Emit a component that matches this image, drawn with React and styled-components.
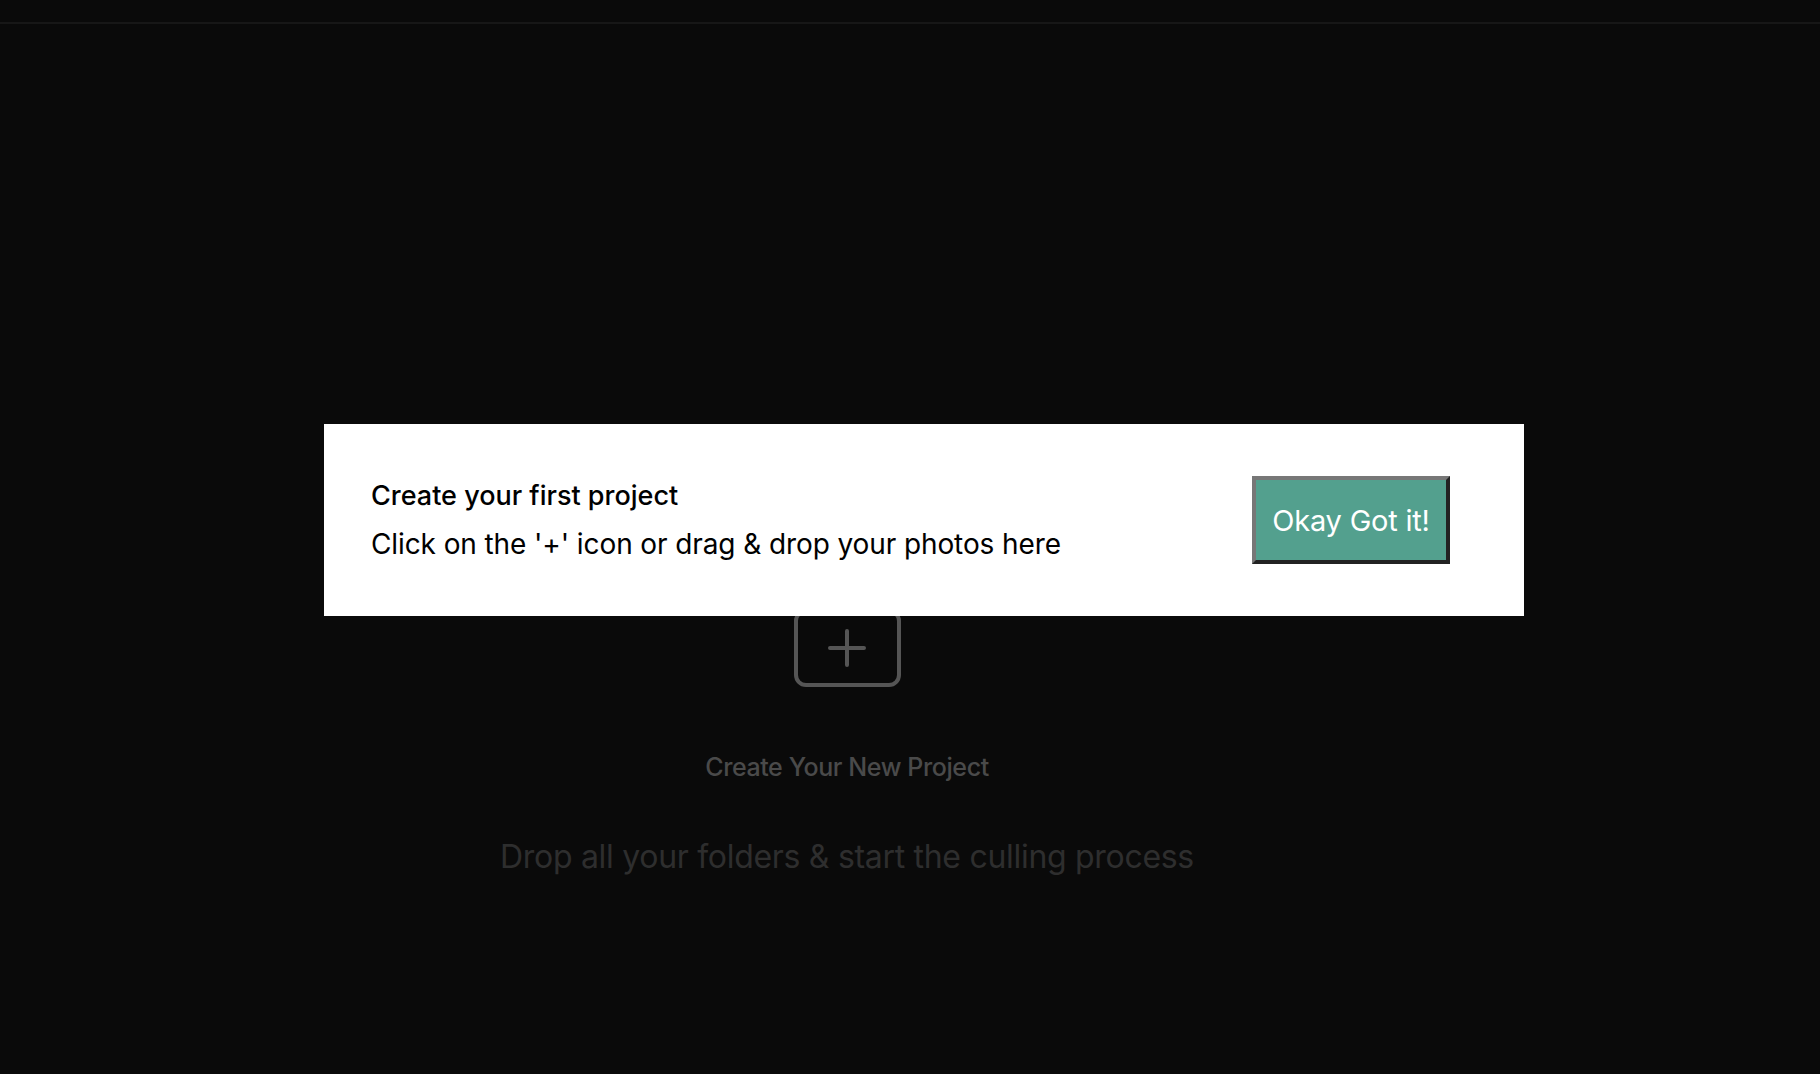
import React from "react";
import styled, { createGlobalStyle } from "styled-components";

const GlobalStyle = createGlobalStyle`
  html, body {
    margin: 0;
    padding: 0;
    background: #0a0a0a;
  }
  body {
    font-family: Inter, "Noto Sans", "Liberation Sans", sans-serif;
  }
  * {
    box-sizing: border-box;
  }
`;

const App = () => {
  return (
    <Page>
      <GlobalStyle />
      <TopBar />
      <Main>
        <AddBox aria-label="Create project">
          <svg width="38" height="38" viewBox="0 0 38 38" fill="none">
            <path
              d="M19 2v34M2 19h34"
              stroke="#555"
              strokeWidth="4"
              strokeLinecap="round"
            />
          </svg>
        </AddBox>
        <Heading>Create Your New Project</Heading>
        <Hint>Drop all your folders &amp; start the culling process</Hint>
      </Main>

      <Tour>
        <TourText>
          <TourTitle>Create your first project</TourTitle>
          <TourBody>Click on the '+' icon or drag &amp; drop your photos here</TourBody>
        </TourText>
        <OkButton>Okay Got it!</OkButton>
      </Tour>
    </Page>
  );
};

// Styled-components
const Page = styled.div`
  position: relative;
  min-height: 100vh;
  display: flex;
  flex-direction: column;
  background: #0a0a0a;
`;

const TopBar = styled.div`
  height: 24px;
  border-bottom: 2px solid #171717;
`;

const Main = styled.div`
  display: flex;
  flex-direction: column;
  align-items: center;
  padding: 585px 126px 0 0;
`;

const AddBox = styled.div`
  width: 107px;
  height: 78px;
  border: 4px solid #555;
  border-radius: 12px;
  display: flex;
  align-items: center;
  justify-content: center;
  cursor: pointer;
`;

const Heading = styled.div`
  margin-top: 65px;
  font-size: 25px;
  line-height: 30px;
  font-weight: 500;
  letter-spacing: -0.4px;
  color: #4a4a4a;
`;

const Hint = styled.div`
  margin-top: 56px;
  font-size: 32px;
  line-height: 38px;
  letter-spacing: -0.3px;
  color: #2e2e2e;
`;

const Tour = styled.div`
  position: absolute;
  top: 424px;
  left: 324px;
  width: 1200px;
  height: 192px;
  background: #fff;
  display: flex;
  align-items: center;
  justify-content: space-between;
  padding: 0 74px 0 47px;
`;

const TourText = styled.div`
  display: flex;
  flex-direction: column;
  gap: 13px;
  color: #000;
`;

const TourTitle = styled.div`
  font-size: 27px;
  line-height: 34px;
  font-weight: 500;
  letter-spacing: 0;
`;

const TourBody = styled.div`
  font-size: 28px;
  line-height: 36px;
  letter-spacing: -0.1px;
`;

const OkButton = styled.button`
  width: 198px;
  height: 88px;
  background: #53a08e;
  border: 4px solid;
  border-color: #777 #222 #222 #777;
  color: #fff;
  font-family: Inter, "Noto Sans", sans-serif;
  font-size: 29px;
  letter-spacing: -0.2px;
  padding: 0;
  cursor: pointer;
`;

export default App;
